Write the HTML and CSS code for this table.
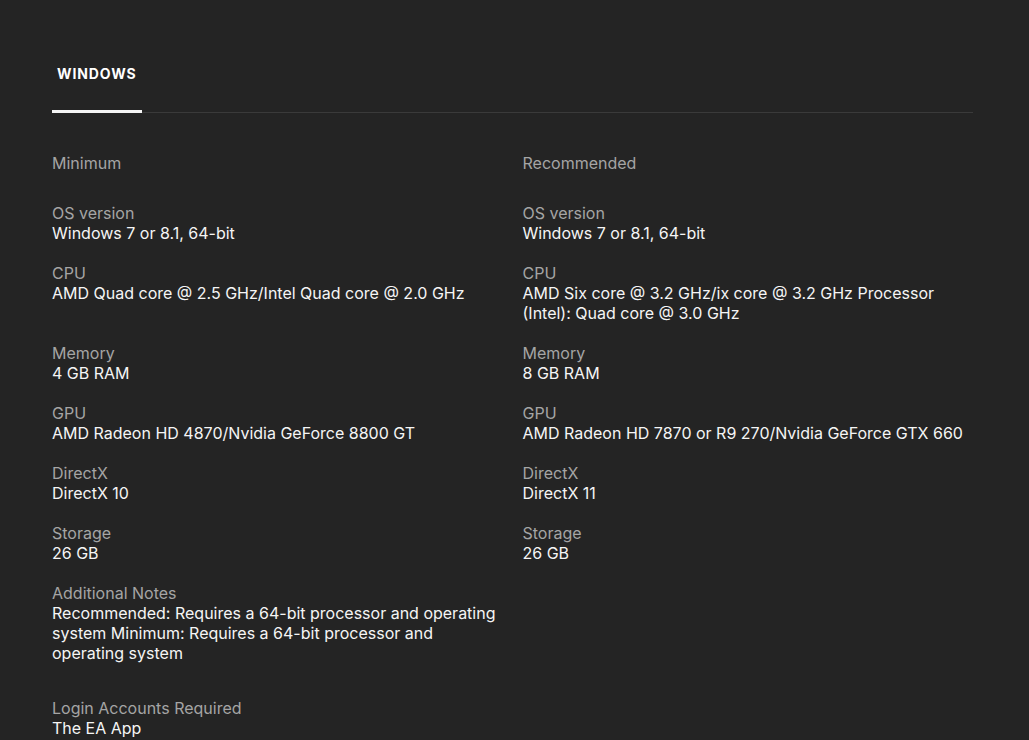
FILE: index.html
```html
<!DOCTYPE html>
<html>
<head>
<meta charset="utf-8">
<link rel="stylesheet" href="styles.css">
</head>
<body>
<div class="page">
  <div class="tabs">
    <div class="tab active">WINDOWS</div>
  </div>
  <div class="specs">
    <div class="col-head">Minimum</div>
    <div class="col-head">Recommended</div>

    <div class="item"><div class="label">OS version</div><div class="value">Windows 7 or 8.1, 64-bit</div></div>
    <div class="item"><div class="label">OS version</div><div class="value">Windows 7 or 8.1, 64-bit</div></div>

    <div class="item"><div class="label">CPU</div><div class="value">AMD Quad core @ 2.5 GHz/Intel Quad core @ 2.0 GHz</div></div>
    <div class="item"><div class="label">CPU</div><div class="value">AMD Six core @ 3.2 GHz/ix core @ 3.2 GHz Processor (Intel): Quad core @ 3.0 GHz</div></div>

    <div class="item"><div class="label">Memory</div><div class="value">4 GB RAM</div></div>
    <div class="item"><div class="label">Memory</div><div class="value">8 GB RAM</div></div>

    <div class="item"><div class="label">GPU</div><div class="value">AMD Radeon HD 4870/Nvidia GeForce 8800 GT</div></div>
    <div class="item"><div class="label">GPU</div><div class="value">AMD Radeon HD 7870 or R9 270/Nvidia GeForce GTX 660</div></div>

    <div class="item"><div class="label">DirectX</div><div class="value">DirectX 10</div></div>
    <div class="item"><div class="label">DirectX</div><div class="value">DirectX 11</div></div>

    <div class="item"><div class="label">Storage</div><div class="value">26 GB</div></div>
    <div class="item"><div class="label">Storage</div><div class="value">26 GB</div></div>

    <div class="item"><div class="label">Additional Notes</div><div class="value">Recommended: Requires a 64-bit processor and operating system Minimum: Requires a 64-bit processor and operating system</div></div>
    <div class="item"></div>
  </div>
  <div class="login">
    <div class="label">Login Accounts Required</div>
    <div class="value">The EA App</div>
  </div>
</div>
</body>
</html>
```
FILE: styles.css
```css
html, body {
  margin: 0;
  padding: 0;
  background: #242424;
}
body {
  font-family: Inter, "Noto Sans", sans-serif;
  color: #f5f5f5;
  overflow: hidden;
  height: 740px;
}
.page {
  width: 921px;
  margin-left: 52px;
  padding-top: 57px;
}
.tabs {
  display: flex;
  border-bottom: 1px solid #3a3a3a;
}
.tab {
  font-size: 14px;
  line-height: 16px;
  font-weight: 700;
  letter-spacing: 0.9px;
  color: #fff;
  padding: 9px 5px 30px 5px;
  width: 80px;
  margin-bottom: -1px;
}
.tab.active {
  border-bottom: 3px solid #f5f5f5;
  padding-bottom: 28px;
}
.specs {
  display: grid;
  grid-template-columns: 1fr 1fr;
  column-gap: 20px;
  padding-top: 40px;
}
.col-head {
  font-size: 16px;
  line-height: 20px;
  color: #a5a5a5;
  margin-bottom: 30px;
}
.item {
  margin-bottom: 20px;
}
.label {
  font-size: 16px;
  line-height: 20px;
  color: #a5a5a5;
}
.value {
  font-size: 16px;
  line-height: 20px;
  color: #f5f5f5;
}
.login {
  padding-top: 15px;
}
```
